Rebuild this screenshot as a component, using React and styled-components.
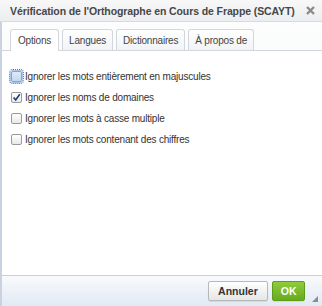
import React from "react";
import styled, { createGlobalStyle } from "styled-components";

const options = [
  { label: "Ignorer les mots entièrement en majuscules", checked: false, focused: true },
  { label: "Ignorer les noms de domaines", checked: true },
  { label: "Ignorer les mots à casse multiple", checked: false },
  { label: "Ignorer les mots contenant des chiffres", checked: false },
];

const tabs = ["Options", "Langues", "Dictionnaires", "À propos de"];

const App = () => {
  return (
    <>
      <GlobalStyle />
      <Dialog>
        <TitleBar>
          <Title>Vérification de l'Orthographe en Cours de Frappe (SCAYT)</Title>
          <Close>
            <svg width="9" height="9" viewBox="0 0 9 9">
              <path d="M1 1 L8 8 M8 1 L1 8" stroke="#8a8a8a" strokeWidth="2.4" />
            </svg>
          </Close>
        </TitleBar>
        <TabBar>
          {tabs.map((t, i) => (
            <Tab key={t} active={i === 0}>
              {t}
            </Tab>
          ))}
        </TabBar>
        <Panel>
          {options.map((o) => (
            <Row key={o.label}>
              <Box checked={o.checked} focused={o.focused}>
                {o.checked && (
                  <svg width="11" height="11" viewBox="0 0 11 11">
                    <path
                      d="M2 5.5 L4.5 8.5 L9.5 1.5"
                      stroke="#1f3f73"
                      strokeWidth="2"
                      fill="none"
                    />
                  </svg>
                )}
              </Box>
              <Label>{o.label}</Label>
            </Row>
          ))}
        </Panel>
        <Footer>
          <Button>Annuler</Button>
          <Button primary>OK</Button>
          <Grip />
        </Footer>
      </Dialog>
    </>
  );
};

const GlobalStyle = createGlobalStyle`
  body {
    margin: 0;
    background: #fff;
    font-family: "Liberation Sans", Arial, sans-serif;
  }
`;

const Dialog = styled.div`
  width: 322px;
  height: 306px;
  display: flex;
  flex-direction: column;
  background: #fff;
  overflow: hidden;
`;

const TitleBar = styled.div`
  height: 21px;
  display: flex;
  align-items: center;
  justify-content: space-between;
  padding: 0 7px 0 10px;
  background: linear-gradient(#f8f8f8, #ebedf0);
  border-bottom: 1px solid #d8dce2;
`;

const Title = styled.div`
  font-size: 10.5px;
  font-weight: bold;
  letter-spacing: -0.1px;
  color: #474747;
  white-space: nowrap;
`;

const Close = styled.div`
  display: flex;
  align-items: center;
`;

const TabBar = styled.div`
  height: 28px;
  display: flex;
  align-items: flex-end;
  gap: 3px;
  padding-left: 8px;
  background: linear-gradient(#fdfdfd, #fafbfc);
  border-left: 2px solid #c9d2de;
`;

const Tab = styled.div`
  padding: 0 ${(p) => (p.active ? "7px" : "6px")};
  display: flex;
  align-items: center;
  font-size: 10px;
  letter-spacing: -0.2px;
  color: #444;
  border: 1px solid #d3d7dc;
  border-bottom: none;
  border-radius: 3px 3px 0 0;
  background: ${(p) => (p.active ? "#fff" : "linear-gradient(#fff, #f1f3f5)")};
  margin-bottom: ${(p) => (p.active ? "-1px" : "0")};
  height: ${(p) => (p.active ? "21px" : "20px")};
  position: relative;
  z-index: 1;
`;

const Panel = styled.div`
  flex: 1;
  display: flex;
  flex-direction: column;
  gap: 8px;
  padding: 19px 0 0 9px;
  border-top: 1px solid #d3d7dc;
  border-left: 2px solid #c9d2de;
`;

const Row = styled.div`
  display: flex;
  align-items: center;
  height: 13px;
`;

const Box = styled.span`
  width: 11px;
  height: 11px;
  box-sizing: border-box;
  border: 1px solid ${(p) => (p.focused ? "#7fa6d6" : "#9a9a9a")};
  border-radius: 2px;
  background: ${(p) =>
    p.focused ? "linear-gradient(#dfeaf7, #c3d7ef)" : "linear-gradient(#fff, #e9e9e9)"};
  box-shadow: ${(p) => (p.focused ? "0 0 0 1px #a9c6ea" : "none")};
  outline: ${(p) => (p.focused ? "1px dotted #5a6f8c" : "none")};
  outline-offset: 1px;
  display: flex;
  align-items: center;
  justify-content: center;
  margin-right: 3px;
`;

const Label = styled.span`
  font-size: 10px;
  letter-spacing: -0.2px;
  color: #333;
  white-space: nowrap;
`;

const Footer = styled.div`
  height: 30px;
  display: flex;
  align-items: center;
  justify-content: flex-end;
  gap: 4px;
  padding-right: 17px;
  border-top: 1px solid #c9d0da;
  border-left: 2px solid #c9d2de;
  background: linear-gradient(#f8fafd, #e2e9f4);
  position: relative;
`;

const Button = styled.div`
  height: 20px;
  box-sizing: border-box;
  padding: 0 ${(p) => (p.primary ? "7.5px" : "9.5px")};
  display: flex;
  align-items: center;
  font-size: 10.5px;
  font-weight: bold;
  border-radius: 2px;
  color: ${(p) => (p.primary ? "#fff" : "#333")};
  border: 1px solid ${(p) => (p.primary ? "#5d9d1b" : "#b8b8b8")};
  background: ${(p) =>
    p.primary ? "linear-gradient(#8fcb3d, #69ab1d)" : "linear-gradient(#fff, #e6e6e6)"};
  box-shadow: 0 1px 1px rgba(0, 0, 0, 0.08);
`;

const Grip = styled.span`
  position: absolute;
  right: 4px;
  bottom: 4px;
  width: 0;
  height: 0;
  border-left: 6px solid transparent;
  border-bottom: 6px solid #8c8c8c;
`;

export default App;
